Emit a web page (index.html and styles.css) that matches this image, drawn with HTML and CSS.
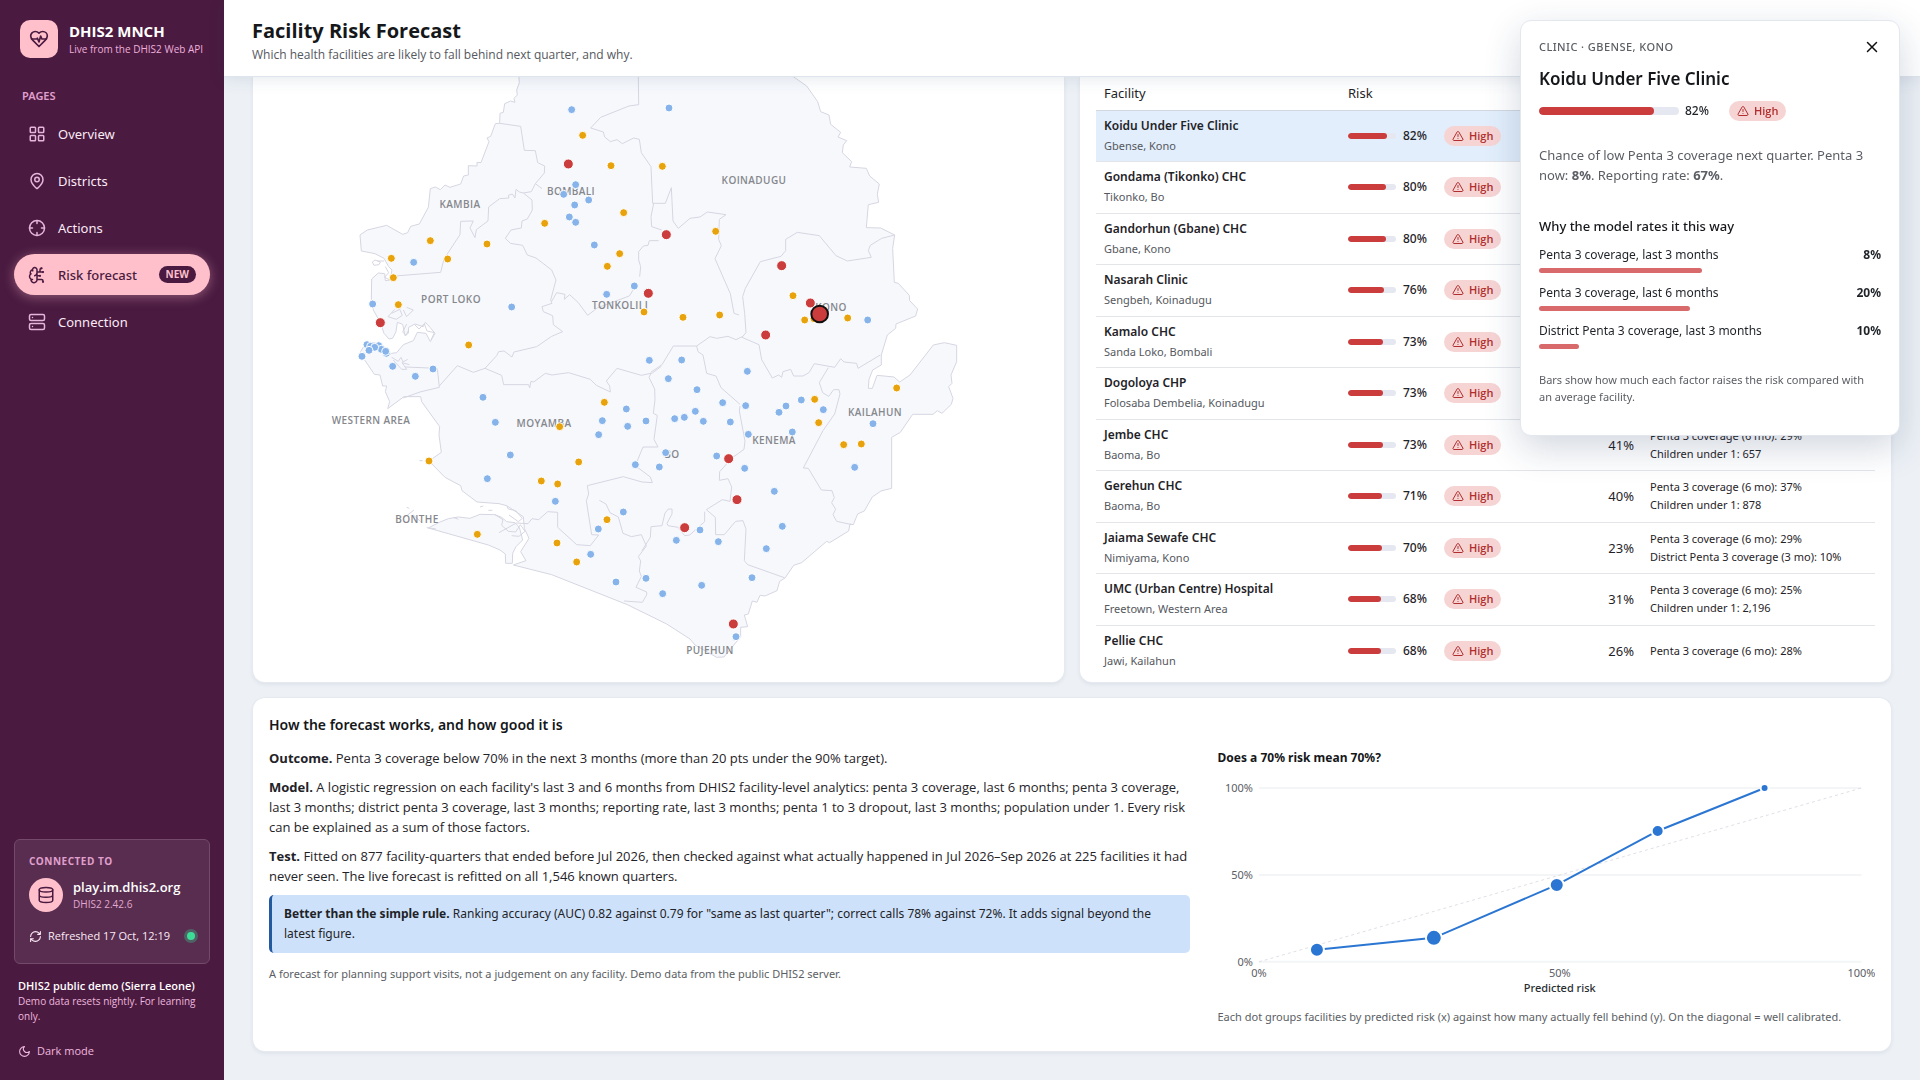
FILE: index.html
```html
<!DOCTYPE html>
<html lang="en">
<head>
<meta charset="utf-8">
<meta name="viewport" content="width=device-width, initial-scale=1">
<title>Facility Risk Forecast</title>
<link rel="stylesheet" href="styles.css">
</head>
<body>
<svg class="defs" width="0" height="0" aria-hidden="true">
  <symbol id="i-warn" viewBox="0 0 24 24"><path d="m21.7 18-8-14a2 2 0 0 0-3.500 0l-8 14A2 2 0 0 0 4 21h16a2 2 0 0 0 1.700-3M12 9v4M12 17h.01"/></symbol>
</svg>
<div class="app">
  <aside class="sidebar">
    <div class="brand">
      <span class="brand-logo"><svg class="icon icon-lg" viewBox="0 0 24 24"><path d="M19 14c1.500-1.500 3-3.200 3-5.500A5.500 5.500 0 0 0 16.500 3c-1.800 0-3 .5-4.500 2-1.500-1.500-2.700-2-4.500-2A5.500 5.500 0 0 0 2 8.500c0 2.300 1.500 4 3 5.500l7 7Z"/><path d="M3.200 12H9.500l.5-1 2 4.500 2-7 1.500 3.500h5.300"/></svg></span>
      <div><div class="brand-name">DHIS2 MNCH</div><div class="brand-sub">Live from the DHIS2 Web API</div></div>
    </div>
    <div class="nav-title">PAGES</div>
    <nav class="nav">
      <a href="#overview"><svg class="icon" viewBox="0 0 24 24"><rect x="3" y="3" width="7" height="7" rx="1"/><rect x="14" y="3" width="7" height="7" rx="1"/><rect x="14" y="14" width="7" height="7" rx="1"/><rect x="3" y="14" width="7" height="7" rx="1"/></svg>Overview</a>
      <a href="#districts"><svg class="icon" viewBox="0 0 24 24"><path d="M20 10c0 5-5.500 10.200-7.400 11.800a1 1 0 0 1-1.200 0C9.500 20.200 4 15 4 10a8 8 0 0 1 16 0"/><circle cx="12" cy="10" r="3"/></svg>Districts</a>
      <a href="#actions"><svg class="icon" viewBox="0 0 24 24"><circle cx="12" cy="12" r="10"/><path d="M22 12h-4M6 12H2M12 6V2M12 22v-4"/></svg>Actions</a>
      <a href="#risk" class="active" aria-current="page"><svg class="icon" viewBox="0 0 24 24"><path d="M12 5a3 3 0 1 0-6 .1 4 4 0 0 0-2.500 5.800 4 4 0 0 0 .6 6.600A4 4 0 1 0 12 18ZM9 13a4.500 4.500 0 0 0 3-4M6 5.100A3 3 0 0 0 6.400 6.500M3.500 10.900a4 4 0 0 1 .6-.4M6 18a4 4 0 0 1-2-.5M12 13h4M12 18h6a2 2 0 0 1 2 2v1M12 8h8M16 8V5a2 2 0 0 1 2-2"/><circle cx="16" cy="13" r=".5"/><circle cx="18" cy="3" r=".5"/><circle cx="20" cy="21" r=".5"/><circle cx="20" cy="8" r=".5"/></svg>Risk forecast<span class="badge">NEW</span></a>
      <a href="#connection"><svg class="icon" viewBox="0 0 24 24"><rect x="2" y="2" width="20" height="8" rx="2"/><rect x="2" y="14" width="20" height="8" rx="2"/><path d="M6 6h.01M6 18h.01"/></svg>Connection</a>
    </nav>
    <div class="side-foot">
      <section class="conn">
        <div class="conn-title">CONNECTED TO</div>
        <div class="conn-host">
          <span class="conn-icon"><svg class="icon" viewBox="0 0 24 24"><ellipse cx="12" cy="5" rx="9" ry="3"/><path d="M3 5v14a9 3 0 0 0 18 0V5M3 12a9 3 0 0 0 18 0"/></svg></span>
          <div><div class="host">play.im.dhis2.org</div><div class="version">DHIS2 2.42.6</div></div>
        </div>
        <div class="conn-refresh"><svg class="icon icon-xs" viewBox="0 0 24 24"><path d="M3 12a9 9 0 0 1 9-9 9.700 9.700 0 0 1 6.700 2.700L21 8M21 3v5h-5M21 12a9 9 0 0 1-9 9 9.700 9.700 0 0 1-6.700-2.700L3 16M8 16H3v5"/></svg>Refreshed 17 Oct, 12:19<span class="live"></span></div>
      </section>
      <p class="demo"><strong>DHIS2 public demo (Sierra Leone)</strong><br>Demo data resets nightly. For learning only.</p>
      <button class="dark" type="button"><svg class="icon icon-xs" viewBox="0 0 24 24"><path d="M12 3a6 6 0 0 0 9 9 9 9 0 1 1-9-9Z"/></svg>Dark mode</button>
    </div>
  </aside>

  <div class="main">
    <header class="topbar">
      <h1>Facility Risk Forecast</h1>
      <p>Which health facilities are likely to fall behind next quarter, and why.</p>
    </header>
    <main class="content">
      <div class="row">
        <section class="card map-card">
          <svg class="map" viewBox="253 77 811 605" role="img" aria-label="Map of facilities by risk">
            <g transform="translate(240 70) scale(.33333)">
              <path class="land" d="M835 0L838 38 830 60 832 75 822 85 825 97 812 93 794 101 790 127 780 130 779 160 766 161 752 199 741 204 747 215 723 278 711 277 711 288 685 287 685 315 671 318 662 342 630 352 615 345 601 359 586 351 571 356 565 412 538 462 512 469 503 488 488 493 440 466 382 480 360 495 364 543 405 551 432 565 446 590 456 600 450 630 436 632 434 611 415 609 395 627 394 690 400 720 421 758 432 790 447 807 458 805 468 785 472 757 488 763 495 797 505 790 506 772 525 762 550 770 556 757 570 772 585 790 571 815 558 790 532 787 520 812 490 824 470 848 455 850 440 860 425 845 412 820 380 815 362 845 366 858 403 913 420 915 428 948 440 948 436 965 449 995 443 1016 492 980 542 980 545 995 599 1070 597 1095 604 1147 567 1173 615 1222 662 1247 666 1262 711 1296 777 1301 800 1307 850 1340 853 1375 867 1405 842 1445 858 1472 820 1485 935 1514 1162 1604 1280 1662 1350 1707 1365 1725 1430 1762 1452 1761 1475 1733 1502 1700 1502 1672 1523 1670 1513 1635 1525 1632 1537 1593 1551 1597 1560 1576 1575 1578 1611 1562 1619 1534 1635 1524 1661 1486 1685 1478 1760 1414 1769 1418 1826 1383 1830 1362 1840 1364 1853 1332 1873 1323 1897 1281 1923 1263 1955 1255 1955 1102 1981 1087 2018 1033 2079 1033 2092 1022 2106 1030 2134 1003 2139 985 2126 950 2136 940 2133 915 2150 875 2150 826 2113 818 2080 825 2010 915 1979 936 1962 921 1911 916 1897 955 1885 955 1887 928 1898 900 1924 885 1924 855 1942 795 1967 775 1968 762 2027 738 2033 717 2009 692 2008 676 1975 640 1963 637 1958 535 1964 495 1922 474 1879 473 1885 404 1916 397 1912 373 1918 342 1889 318 1879 295 1829 291 1835 275 1807 248 1810 225 1820 212 1794 201 1802 187 1772 163 1767 135 1742 125 1733 95 1700 48 1660 20 1640 0Z"/>
              <path class="land" d="M565 1374L600 1356 625 1346 655 1341 690 1345 720 1333 765 1334 785 1342 800 1355 825 1358 838 1372 848 1410 828 1430 818 1450 817 1480 797 1480 796 1452 780 1440 745 1425Z"/>
              <g class="border">
                <path d="M779 160L842 169 853 241 886 242 893 278 914 288 913 309 886 341 874 365 850 369 876 390 877 420 862 447 846 453 844 474 813 480 796 505 811 520 848 526 862 555 888 564 935 600 948 630 932 690 936 700 906 710 910 725 938 737 940 764 968 785 935 799 890 830 822 846 816 861 792 843 776 845 770 857 735 895 700 907 652 887 598 948 M886 341l20 15 M850 369l-12-3-10-8-3 26-8-12-12 4 2 8-28 2-33 25-2 42-35 26-4 24-15-29 10-21-38 1-2 40-48 73-10 40-137 11 M598 952l-6-57-97-4 M735 895l50 21 6 28 75 0 3 10 4-20 8 2 35-26 20 5 50-7 65 20 18 18 42 20-2-18-10-15 32-38 73 21 33-7 27-20 M1233 910l-6 12 17 35 1 33 M935 694l15-26 25 5-2 15 16-14 26 24 28 38 30-23 95-35 15-24 M1195 20l1 84-29 4-85 34-30 32 38 12 4 15 17 14 20-6 16 12 34-17 17 4 6 40 29 42 5 110 38 0 18-47 5 100 16 22 35-30 30-4 22-15 56 8-20 14-2 60 8 19-19 39 46 105 11 59 15 5 M1241 400l-8 40 2 30 30 10 M1256 512l-28 0-4 14-14 2-14 17 0 25 6 20-3 30 M598 952l-58 14-50 18"/>
                <path d="M1514 730l-6-50 8-25 45-80 62-16 14-17 0-34 35-21 66 10 50 60 34 16 72-11-9-20 6-16 34-21 39-10 M1514 730l4 58-12 14 51 22 8 45 32 55 19-9 9 7 4-17 23-7 9 20 28 0 18-10 16-27 61 11 18-26 10 10 38 4 4 15 67-40 M1506 800l-18 9-24-10-34 6-20-5-40 28-70 0-34 56-34 23 M1370 828l4 17 15 10 11 55 28 8 15 35 57 50"/>
                <path d="M1765 893l-27 45 10 30 18 11 15-20 16 0 3 13-16 60-35 50-59 112 15 1 39 65 32 2 7 21-8 15 12 20-8 16 11 20 46 10 M1500 1008l-2 15 17 90-3 25-35 25-38 42-1 26 26-5 11 25-5 43-23-5-48 30 27 23 1 52 26 0 34-40 22-2 9 25-5 95 10 12 110 39 M1394 1325l0 30-45 40-15 2-20-25-30-5-3-7 15-28 0-15-11 0-10 12-9 38-33 3-2 32-25 40"/>
                <path d="M1245 990l-5 40 12 6-10 72 12 23-45 0-23 56 45 34 6 17-31-2-56-16-108 27 4 25-7 20 16 102 21 1-25 32-41-3-57-52 0-45-30-2-27 24-20-3-12 15-35-2-52 29 M1078 1291l20 11 12 26 25 13 14 49 25 10 30-6 15 34-24 32 7 13-4 30 6 16-16 33 32 14 0 9-13 22-55-4 M765 1334l24 15-4 17 20 18 22 2 14-22 14 20-18 15-22-2 M800 1307l5 10 22 5 20 23-12 10-28-20"/>
                <path d="M405 570l16 6-4 8-15 2-5-10zM432 573l-20 0M436 590l10 18-12 14 20 10M455 730l24-12 8 18-18 12-25-8 20-22M490 720l10 20 20-20-20-8M500 762l-12 24 10 10 8-16M525 765l12 12 16-16 8 22 22 5-10 22M455 862l20 12 8-12 6 14 14-8M460 870l25 28 15 0-14-20 22 6M720 1311l10-3M745 1321l12 0M640 1342l15 6M500 1312l8 3M490 1345l32-25M520 1335l22 20M560 1373l28 4M538 1172l10 0"/>
              </g>
            </g>
            <g class="district">
              <text x="460" y="208">KAMBIA</text><text x="571" y="195">BOMBALI</text><text x="754" y="184">KOINADUGU</text><text x="451" y="303">PORT LOKO</text><text x="620" y="309">TONKOLILI</text><text x="831" y="311">KONO</text><text x="371" y="424">WESTERN AREA</text><text x="544" y="427">MOYAMBA</text><text x="417" y="523">BONTHE</text><text x="672" y="458">BO</text><text x="774" y="444">KENEMA</text><text x="875" y="416">KAILAHUN</text><text x="710" y="654">PUJEHUN</text>
            </g>
            <g transform="translate(240 70) scale(.33333)">
              <g class="low">
                <circle cx="995" cy="119"/><circle cx="1287" cy="114"/><circle cx="1007" cy="344"/><circle cx="971" cy="373"/><circle cx="1046" cy="390"/><circle cx="1004" cy="405"/><circle cx="988" cy="441"/><circle cx="1007" cy="457"/><circle cx="521" cy="577"/><circle cx="1063" cy="525"/><circle cx="1183" cy="648"/><circle cx="1100" cy="673"/><circle cx="398" cy="702"/><circle cx="815" cy="711"/><circle cx="381" cy="824"/><circle cx="416" cy="827"/><circle cx="392" cy="829"/><circle cx="424" cy="838"/><circle cx="439" cy="850"/><circle cx="437" cy="844"/><circle cx="404" cy="832"/><circle cx="387" cy="841"/><circle cx="366" cy="859"/><circle cx="458" cy="889"/><circle cx="526" cy="919"/><circle cx="579" cy="897"/><circle cx="1228" cy="871"/><circle cx="1325" cy="870"/><circle cx="1285" cy="926"/><circle cx="1371" cy="959"/><circle cx="1522" cy="904"/><circle cx="1883" cy="750"/><circle cx="1684" cy="990"/>
                <circle cx="729" cy="982"/><circle cx="766" cy="1057"/><circle cx="811" cy="1155"/><circle cx="742" cy="1226"/><circle cx="1159" cy="1017"/><circle cx="1087" cy="1052"/><circle cx="1163" cy="1069"/><circle cx="1076" cy="1094"/><circle cx="1218" cy="1053"/><circle cx="1186" cy="1184"/><circle cx="1277" cy="1148"/><circle cx="1258" cy="1191"/><circle cx="1150" cy="1326"/><circle cx="946" cy="1294"/><circle cx="1075" cy="1377"/><circle cx="1052" cy="1453"/><circle cx="1128" cy="1536"/><circle cx="1218" cy="1525"/><circle cx="1268" cy="1571"/>
                <circle cx="1304" cy="1046"/><circle cx="1333" cy="1042"/><circle cx="1366" cy="1024"/><circle cx="1390" cy="1054"/><circle cx="1448" cy="998"/><circle cx="1517" cy="1007"/><circle cx="1471" cy="1056"/><circle cx="1525" cy="1093"/><circle cx="1617" cy="1027"/><circle cx="1638" cy="1008"/><circle cx="1750" cy="1019"/><circle cx="1657" cy="1086"/><circle cx="1430" cy="1158"/><circle cx="1514" cy="1195"/><circle cx="1899" cy="1061"/><circle cx="1844" cy="1192"/><circle cx="1603" cy="1264"/><circle cx="1627" cy="1369"/><circle cx="1579" cy="1436"/><circle cx="1380" cy="1380"/><circle cx="1309" cy="1411"/><circle cx="1435" cy="1415"/><circle cx="1385" cy="1546"/><circle cx="1536" cy="1523"/><circle cx="1488" cy="1700"/>
              </g>
              <g class="med">
                <circle cx="1028" cy="196"/><circle cx="1113" cy="287"/><circle cx="1267" cy="289"/><circle cx="1151" cy="428"/><circle cx="914" cy="460"/><circle cx="571" cy="512"/><circle cx="741" cy="522"/><circle cx="454" cy="565"/><circle cx="623" cy="567"/><circle cx="460" cy="623"/><circle cx="475" cy="704"/><circle cx="1139" cy="551"/><circle cx="1102" cy="589"/><circle cx="1212" cy="726"/><circle cx="686" cy="825"/><circle cx="1427" cy="484"/><circle cx="1329" cy="742"/><circle cx="1439" cy="735"/><circle cx="1659" cy="677"/><circle cx="1694" cy="750"/><circle cx="1722" cy="746"/><circle cx="1823" cy="744"/><circle cx="1970" cy="954"/><circle cx="1724" cy="988"/>
                <circle cx="1093" cy="997"/><circle cx="959" cy="1070"/><circle cx="567" cy="1173"/><circle cx="1016" cy="1176"/><circle cx="904" cy="1233"/><circle cx="953" cy="1242"/><circle cx="1101" cy="1349"/><circle cx="712" cy="1393"/><circle cx="951" cy="1419"/><circle cx="1010" cy="1476"/><circle cx="1736" cy="1058"/><circle cx="1811" cy="1124"/><circle cx="1864" cy="1122"/>
              </g>
              <g class="high">
                <circle cx="985" cy="282"/><circle cx="1279" cy="494"/><circle cx="1225" cy="670"/><circle cx="421" cy="758"/><circle cx="1625" cy="587"/><circle cx="1711" cy="699"/><circle cx="1577" cy="795"/><circle cx="1466" cy="1166"/><circle cx="1491" cy="1289"/><circle cx="1334" cy="1373"/><circle cx="1480" cy="1662"/>
              </g>
              <circle class="selected" cx="1739" cy="732" r="25"/>
            </g>
          </svg>
        </section>
        <section class="card table-card">
          <table>
            <colgroup><col class="c-fac"><col class="c-risk"><col class="c-now"><col class="c-why"></colgroup>
            <thead><tr><th scope="col">Facility</th><th scope="col">Risk</th><th></th><th></th></tr></thead>
            <tbody>
              <tr class="sel"><td><b>Koidu Under Five Clinic</b><small>Gbense, Kono</small></td><td><div class="risk"><span class="bar"><i style="width:82%"></i></span><span class="pct">82%</span><span class="chip"><svg class="icon"><use href="#i-warn"/></svg>High</span></div></td><td></td><td></td></tr>
              <tr><td><b>Gondama (Tikonko) CHC</b><small>Tikonko, Bo</small></td><td><div class="risk"><span class="bar"><i style="width:80%"></i></span><span class="pct">80%</span><span class="chip"><svg class="icon"><use href="#i-warn"/></svg>High</span></div></td><td></td><td></td></tr>
              <tr><td><b>Gandorhun (Gbane) CHC</b><small>Gbane, Kono</small></td><td><div class="risk"><span class="bar"><i style="width:80%"></i></span><span class="pct">80%</span><span class="chip"><svg class="icon"><use href="#i-warn"/></svg>High</span></div></td><td></td><td></td></tr>
              <tr><td><b>Nasarah Clinic</b><small>Sengbeh, Koinadugu</small></td><td><div class="risk"><span class="bar"><i style="width:76%"></i></span><span class="pct">76%</span><span class="chip"><svg class="icon"><use href="#i-warn"/></svg>High</span></div></td><td></td><td></td></tr>
              <tr><td><b>Kamalo CHC</b><small>Sanda Loko, Bombali</small></td><td><div class="risk"><span class="bar"><i style="width:73%"></i></span><span class="pct">73%</span><span class="chip"><svg class="icon"><use href="#i-warn"/></svg>High</span></div></td><td></td><td></td></tr>
              <tr><td><b>Dogoloya CHP</b><small>Folosaba Dembelia, Koinadugu</small></td><td><div class="risk"><span class="bar"><i style="width:73%"></i></span><span class="pct">73%</span><span class="chip"><svg class="icon"><use href="#i-warn"/></svg>High</span></div></td><td></td><td></td></tr>
              <tr><td><b>Jembe CHC</b><small>Baoma, Bo</small></td><td><div class="risk"><span class="bar"><i style="width:73%"></i></span><span class="pct">73%</span><span class="chip"><svg class="icon"><use href="#i-warn"/></svg>High</span></div></td><td class="now">41%</td><td class="why">Penta 3 coverage (6 mo): 29%<br>Children under 1: 657</td></tr>
              <tr><td><b>Gerehun CHC</b><small>Baoma, Bo</small></td><td><div class="risk"><span class="bar"><i style="width:71%"></i></span><span class="pct">71%</span><span class="chip"><svg class="icon"><use href="#i-warn"/></svg>High</span></div></td><td class="now">40%</td><td class="why">Penta 3 coverage (6 mo): 37%<br>Children under 1: 878</td></tr>
              <tr><td><b>Jaiama Sewafe CHC</b><small>Nimiyama, Kono</small></td><td><div class="risk"><span class="bar"><i style="width:70%"></i></span><span class="pct">70%</span><span class="chip"><svg class="icon"><use href="#i-warn"/></svg>High</span></div></td><td class="now">23%</td><td class="why">Penta 3 coverage (6 mo): 29%<br>District Penta 3 coverage (3 mo): 10%</td></tr>
              <tr><td><b>UMC (Urban Centre) Hospital</b><small>Freetown, Western Area</small></td><td><div class="risk"><span class="bar"><i style="width:68%"></i></span><span class="pct">68%</span><span class="chip"><svg class="icon"><use href="#i-warn"/></svg>High</span></div></td><td class="now">31%</td><td class="why">Penta 3 coverage (6 mo): 25%<br>Children under 1: 2,196</td></tr>
              <tr><td><b>Pellie CHC</b><small>Jawi, Kailahun</small></td><td><div class="risk"><span class="bar"><i style="width:68%"></i></span><span class="pct">68%</span><span class="chip"><svg class="icon"><use href="#i-warn"/></svg>High</span></div></td><td class="now">26%</td><td class="why">Penta 3 coverage (6 mo): 28%</td></tr>
            </tbody>
          </table>
        </section>
      </div>

      <section class="card how">
        <h2>How the forecast works, and how good it is</h2>
        <div class="how-grid">
          <div class="how-text">
            <p><strong>Outcome.</strong> Penta 3 coverage below 70% in the next 3 months (more than 20 pts under the 90% target).</p>
            <p><strong>Model.</strong> A logistic regression on each facility's last 3 and 6 months from DHIS2 facility-level analytics: penta 3 coverage, last 6 months; penta 3 coverage, last 3 months; district penta 3 coverage, last 3 months; reporting rate, last 3 months; penta 1 to 3 dropout, last 3 months; population under 1. Every risk can be explained as a sum of those factors.</p>
            <p><strong>Test.</strong> Fitted on 877 facility-quarters that ended before Jul 2026, then checked against what actually happened in Jul 2026–Sep 2026 at 225 facilities it had never seen. The live forecast is refitted on all 1,546 known quarters.</p>
            <p class="callout"><strong>Better than the simple rule.</strong> Ranking accuracy (AUC) 0.82 against 0.79 for "same as last quarter"; correct calls 78% against 72%. It adds signal beyond the latest figure.</p>
            <p class="note">A forecast for planning support visits, not a judgement on any facility. Demo data from the public DHIS2 server.</p>
          </div>
          <div class="calib">
            <h3>Does a 70% risk mean 70%?</h3>
            <svg class="chart" viewBox="0 0 658 232" role="img" aria-label="Calibration chart">
              <path class="grid" d="M41 20H644M41 107H644M41 194H644"/>
              <path class="diag" d="M41 194L644 20"/>
              <path class="line" d="M99 182L216 170 339 117 440 63 547 20"/>
              <g class="pts"><circle cx="99" cy="182" r="7"/><circle cx="216" cy="170" r="8"/><circle cx="339" cy="117" r="7"/><circle cx="440" cy="63" r="6"/><circle cx="547" cy="20" r="4"/></g>
              <g class="ylab"><text x="35" y="24">100%</text><text x="35" y="111">50%</text><text x="35" y="198">0%</text></g>
              <g class="xlab"><text x="41" y="209">0%</text><text x="342" y="209">50%</text><text x="644" y="209">100%</text><text class="axis" x="342" y="224">Predicted risk</text></g>
            </svg>
            <p class="note">Each dot groups facilities by predicted risk (x) against how many actually fell behind (y). On the diagonal = well calibrated.</p>
          </div>
        </div>
      </section>
    </main>
  </div>
</div>

<aside class="panel">
  <div class="panel-top"><span>CLINIC · GBENSE, KONO</span><button type="button" aria-label="Close"><svg class="icon" viewBox="0 0 24 24"><path d="M18 6 6 18M6 6l12 12"/></svg></button></div>
  <h2>Koidu Under Five Clinic</h2>
  <div class="risk risk-lg"><span class="bar"><i style="width:82%"></i></span><span class="pct">82%</span><span class="chip"><svg class="icon"><use href="#i-warn"/></svg>High</span></div>
  <p class="panel-text">Chance of low Penta 3 coverage next quarter. Penta 3 now: <strong>8%</strong>. Reporting rate: <strong>67%</strong>.</p>
  <h3>Why the model rates it this way</h3>
  <ul>
    <li><div><span>Penta 3 coverage, last 3 months</span><strong>8%</strong></div><i style="width:163px"></i></li>
    <li><div><span>Penta 3 coverage, last 6 months</span><strong>20%</strong></div><i style="width:151px"></i></li>
    <li><div><span>District Penta 3 coverage, last 3 months</span><strong>10%</strong></div><i style="width:40px"></i></li>
  </ul>
  <p class="note">Bars show how much each factor raises the risk compared with an average facility.</p>
</aside>
</body>
</html>
```
FILE: styles.css
```css
* { box-sizing: border-box; }
body {
  margin: 0;
  background: #edf1f6;
  color: #1f2328;
  font: 12px/20px "Noto Sans", "Open Sans", sans-serif;
}
h1, h2, h3, p, ul { margin: 0; padding: 0; }
h1, h2, h3 { color: #15171a; }
.defs { position: absolute; }
.icon {
  width: 18px; height: 18px; flex: none;
  fill: none; stroke: currentColor; stroke-width: 2;
  stroke-linecap: round; stroke-linejoin: round;
}
.icon-lg { width: 20px; height: 20px; }
.icon-xs { width: 13px; height: 13px; }
.topbar, .how-text, .chip, .district, .brand, .side-foot { font-family: "Open Sans", "Noto Sans", sans-serif; }

.app { display: flex; min-height: 100vh; }

/* Sidebar */
.sidebar {
  position: sticky; top: 0;
  display: flex; flex-direction: column;
  flex: 0 0 224px; min-width: 0; height: 100vh;
  padding: 20px 14px 19px;
  background: #4a1a40; color: #f3d3ea;
}
.brand { display: flex; align-items: center; gap: 11px; padding-left: 6px; white-space: nowrap; }
.brand-logo {
  display: grid; place-items: center;
  width: 38px; height: 38px; flex: none;
  border-radius: 10px; background: #ffc0cb; color: #4a1a40;
}
.brand-name { color: #fff; font-size: 15px; font-weight: 700; line-height: 20px; }
.brand-sub { color: #eeb0dc; font-size: 10px; line-height: 16px; }
.nav-title { margin: 28px 8px 7px; color: #e0a0ce; font-size: 11px; font-weight: 600; }
.nav { display: flex; flex-direction: column; gap: 6px; }
.nav a {
  display: flex; align-items: center; gap: 12px;
  height: 41px; padding: 0 14px;
  border-radius: 21px;
  color: #fbeaf6; font-size: 13px; text-decoration: none;
}
.nav a .icon { color: #e6b5da; }
.nav a.active { background: #ffc0cb; color: #4a1a40; font-weight: 500; box-shadow: 0 2px 12px rgba(255, 192, 203, .4); }
.nav a.active .icon { color: #4a1a40; }
.badge {
  margin-left: auto; padding: 0 7px;
  border-radius: 9px; background: #4a1a40; color: #ffc0cb;
  font-size: 10px; font-weight: 700; line-height: 17px;
}
.side-foot { margin-top: auto; }
.conn {
  height: 125px; padding: 11px 14px;
  border: 1px solid #734a69; border-radius: 6px;
  background: #582d4f;
}
.conn-title { color: #e0a0ce; font-size: 10px; font-weight: 700; letter-spacing: .05em; }
.conn-host { display: flex; align-items: center; gap: 10px; margin-top: 7px; }
.conn-icon {
  display: grid; place-items: center;
  width: 34px; height: 34px; flex: none;
  border-radius: 50%; background: #ffc0cb; color: #4a1a40;
}
.host { color: #fff; font-size: 13px; font-weight: 600; line-height: 18px; }
.version { color: #e0a8d0; font-size: 10px; line-height: 16px; }
.conn-refresh { display: flex; align-items: center; gap: 6px; margin-top: 14px; color: #fbeaf6; font-size: 11px; white-space: nowrap; }
.live { width: 8px; height: 8px; margin-left: auto; border-radius: 50%; background: #3ddc97; box-shadow: 0 0 0 3px rgba(61, 220, 151, .3); }
.demo { margin: 14px 4px 0; color: #eeb8de; font-size: 10px; line-height: 15px; }
.demo strong { color: #fff; font-size: 11px; font-weight: 600; }
.dark {
  display: flex; align-items: center; gap: 6px;
  margin: 17px 4px 0; padding: 0; border: 0; background: none;
  color: #eeb8de; font: inherit; font-size: 11px; line-height: 20px;
}

/* Page */
.main { flex: 1; min-width: 0; }
.topbar {
  position: sticky; top: 0; z-index: 2;
  height: 77px; padding: 18px 28px;
  border-bottom: 1px solid #dfe5ec;
  background: #fff; box-shadow: 0 2px 16px rgba(40, 70, 110, .12);
}
h1 { font-size: 20px; font-weight: 700; line-height: 26px; }
.topbar p { color: #55585e; line-height: 21px; }
.content { display: flex; flex-direction: column; gap: 16px; padding: 0 29px; }
.row { display: grid; grid-template-columns: 1fr 1fr; gap: 16px; }
.card {
  min-width: 0; border-radius: 12px; background: #fff;
  box-shadow: 0 0 0 1px #e6eaf0, 0 2px 4px rgba(40, 60, 90, .1);
}
.row .card { border-radius: 0 0 12px 12px; }

/* Map */
.map { display: block; width: 100%; height: auto; }
.land { fill: #f6f8fc; stroke: #d6d6e2; stroke-width: 3; stroke-linejoin: round; }
.border path { fill: none; stroke: #d6d6e2; stroke-width: 3; stroke-linejoin: round; }
.district text { fill: #85878c; font-size: 10px; font-weight: 600; text-anchor: middle; letter-spacing: .04em; }
.low circle, .med circle { r: 12px; stroke: #fff; stroke-width: 3; }
.low circle { fill: #86b3ea; }
.med circle { fill: #e8a20c; }
.high circle { r: 15px; fill: #cb3c3c; stroke: #fff; stroke-width: 3; }
.selected { fill: #cb3c3c; stroke: #101010; stroke-width: 6; }

/* Table */
.table-card { padding: 0 16px; }
table { width: 100%; border-collapse: collapse; table-layout: fixed; }
.c-fac { width: 244px; }
.c-risk { width: 221px; }
.c-now { width: 81px; }
th { height: 33px; padding: 0 8px; border-bottom: 1px solid #d3d8df; font-size: 13px; font-weight: 400; text-align: left; }
td { height: 51px; padding: 0 8px; border-bottom: 1px solid #e3e5e9; white-space: nowrap; }
tr:nth-child(even) td { height: 52px; }
tbody tr:last-child td { border-bottom: 0; }
.sel td { background: #e2eefb; }
td b { display: block; font-size: 12px; font-weight: 600; }
td small { display: block; color: #55585e; font-size: 11px; }
.risk { display: flex; align-items: center; }
.bar { width: 48px; height: 6px; border-radius: 4px; background: #e5e8f0; overflow: hidden; }
.bar i { display: block; height: 100%; border-radius: 4px; background: #cb3c3c; }
.pct { width: 41px; margin-left: 7px; font-weight: 500; }
.chip {
  display: inline-flex; align-items: center; gap: 5px;
  height: 20px; padding: 0 8px;
  border-radius: 10px; background: #f7d4d4; color: #b02e2e;
  font-size: 11px; font-weight: 600;
}
.chip .icon { width: 12px; height: 12px; }
.now { font-size: 13px; text-align: right; }
.why { font-size: 11px; line-height: 18px; }

/* How it works */
.how { padding: 17px 16px 25px; }
.how h2 { font-size: 14px; font-weight: 600; }
.how-grid { display: grid; grid-template-columns: 14fr 10fr; gap: 28px; margin-top: 13px; }
.how-text { display: flex; flex-direction: column; gap: 9px; font-size: 13px; }
.callout {
  padding: 9px 12px; border-left: 3px solid #2259a0; border-radius: 5px; background: #cde2fa;
  font-family: "Noto Sans", sans-serif; font-size: 12px;
}
.note { color: #5b5e64; font-family: "Noto Sans", sans-serif; font-size: 11px; line-height: 18px; }
.how-text .note { margin-top: 3px; }
.calib h3 { font-size: 12px; font-weight: 700; }
.chart { display: block; width: 100%; height: auto; margin-bottom: 8px; }
.chart text { fill: #5b5e64; font-size: 11px; }
.ylab { text-anchor: end; }
.xlab { text-anchor: middle; }
.chart .axis { fill: #2a2d31; font-weight: 500; }
.grid { stroke: #f3f5f6; stroke-width: 2; }
.diag { stroke: #dfdfe6; stroke-dasharray: 3 3; }
.line { fill: none; stroke: #2b76d2; stroke-width: 2; }
.pts circle { fill: #2b76d2; stroke: #fff; stroke-width: 2; }

/* Detail panel */
.panel {
  position: fixed; top: 20px; right: 20px; z-index: 5;
  width: 380px; padding: 17px 18px 30px;
  border: 1px solid #e3e7ee; border-radius: 11px;
  background: #fff; box-shadow: 0 12px 36px rgba(30, 55, 95, .2);
}
.panel-top { display: flex; justify-content: space-between; align-items: center; color: #5b5e64; font-size: 11px; font-weight: 500; letter-spacing: .04em; line-height: 18px; }
.panel-top button { display: grid; padding: 0; border: 0; background: none; color: #101010; }
.panel h2 { margin-top: 10px; font-size: 17px; font-weight: 600; line-height: 26px; }
.risk-lg { margin-top: 9px; }
.risk-lg .bar { width: 140px; height: 8px; }
.risk-lg .pct { margin-left: 6px; width: 44px; }
.panel-text { margin-top: 24px; color: #5b5e64; font-size: 13px; }
.panel h3 { margin-top: 31px; font-size: 13px; font-weight: 500; }
.panel ul { list-style: none; margin-top: 9px; }
.panel li { height: 38px; }
.panel li div { display: flex; justify-content: space-between; }
.panel li i { display: block; height: 5px; margin-top: 3px; border-radius: 3px; background: #d96a6c; }
.panel .note { margin-top: 12px; padding-right: 8px; line-height: 17px; }
```
